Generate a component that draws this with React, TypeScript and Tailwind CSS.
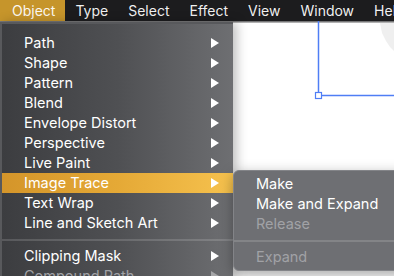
import { ReactNode } from 'react';

interface Item {
  label: string;
  sub?: boolean;
  disabled?: boolean;
  active?: boolean;
  sep?: boolean;
}

const MENUBAR = ['Object', 'Type', 'Select', 'Effect', 'View', 'Window', 'Help'];

const OBJECT_ITEMS: Item[] = [
  { label: 'Path', sub: true },
  { label: 'Shape', sub: true },
  { label: 'Pattern', sub: true },
  { label: 'Blend', sub: true },
  { label: 'Envelope Distort', sub: true },
  { label: 'Perspective', sub: true },
  { label: 'Live Paint', sub: true },
  { label: 'Image Trace', sub: true, active: true },
  { label: 'Text Wrap', sub: true },
  { label: 'Line and Sketch Art', sub: true },
  { label: '', sep: true },
  { label: 'Clipping Mask', sub: true },
  { label: 'Compound Path', sub: true, disabled: true },
];

const TRACE_ITEMS: Item[] = [
  { label: 'Make' },
  { label: 'Make and Expand' },
  { label: 'Release', disabled: true },
  { label: '', sep: true },
  { label: 'Expand', disabled: true },
];

function Arrow({ dim }: { dim?: boolean }) {
  return (
    <svg width="8" height="10" viewBox="0 0 8 10" className={dim ? 'opacity-40' : ''}>
      <polygon points="0,0 8,5 0,10" fill="#ffffff" />
    </svg>
  );
}

function Row({ item }: { item: Item }) {
  if (item.sep) {
    return (
      <div className="h-[13px] flex items-center">
        <div className="h-[2px] w-full bg-white/15" />
      </div>
    );
  }
  const base = item.active
    ? 'bg-gradient-to-r from-[#d4952a] via-[#e5a936] to-[#f6c24e]'
    : '';
  const color = item.disabled ? 'text-[#a1a2a6]' : 'text-white';
  return (
    <div className={`h-5 flex items-center justify-between pl-[22px] pr-[14px] ${base}`}>
      <span className={`text-[14.5px] leading-none ${color}`}>{item.label}</span>
      {item.sub && <Arrow dim={item.disabled} />}
    </div>
  );
}

function Menubar() {
  return (
    <div className="h-[21px] bg-[#1c1c1e] flex items-center text-[14px] text-white/95">
      {MENUBAR.map((m, i) => (
        <div
          key={m}
          className={`h-full flex items-center ${i === 0 ? 'bg-[#c6952b] pl-3 pr-[10px]' : 'px-[10px]'}`}
        >
          {m}
        </div>
      ))}
    </div>
  );
}

function Canvas({ children }: { children: ReactNode }) {
  return (
    <div className="relative flex-1 bg-white">
      <div className="h-[2px] bg-gradient-to-b from-[#5a5a5c] to-[#d0d0d0]" />
      <svg className="absolute left-0 top-0" width="394" height="255" viewBox="0 0 394 255">
        <polygon points="380,2 394,2 394,30 390,26 386,20 382,12" fill="#efefef" />
        <line x1="318.5" y1="0" x2="318.5" y2="74" stroke="#4f7ef5" strokeWidth="1.5" />
        <line x1="318" y1="74.5" x2="394" y2="74.5" stroke="#4f7ef5" strokeWidth="1.5" />
        <rect x="315.5" y="71.5" width="6" height="6" fill="#ffffff" stroke="#4f7ef5" strokeWidth="1.2" />
      </svg>
      {children}
    </div>
  );
}

export default function App() {
  return (
    <div
      className="w-[394px] h-[276px] overflow-hidden flex flex-col bg-white"
      style={{ fontFamily: 'Inter, "Noto Sans", sans-serif' }}
    >
      <Menubar />
      <Canvas>
        <div className="absolute left-0 top-[1px] w-[233px] h-[260px] bg-gradient-to-r from-[#3c3d40] via-[#4f5053] to-[#6e6f72] border-t-[2px] border-l-[2px] border-[#58595c] shadow-[4px_0_10px_rgba(0,0,0,0.25)] pt-[9px]">
          {OBJECT_ITEMS.map((it, i) => (
            <Row key={i} item={it} />
          ))}
        </div>
        <div className="absolute left-[233px] top-[149px] w-[180px] h-[101px] rounded-l-[6px] bg-[#6e6f73] border border-[#838488] shadow-[0_4px_14px_rgba(0,0,0,0.35)] pt-[3px]">
          {TRACE_ITEMS.map((it, i) => (
            <Row key={i} item={it} />
          ))}
        </div>
      </Canvas>
    </div>
  );
}
